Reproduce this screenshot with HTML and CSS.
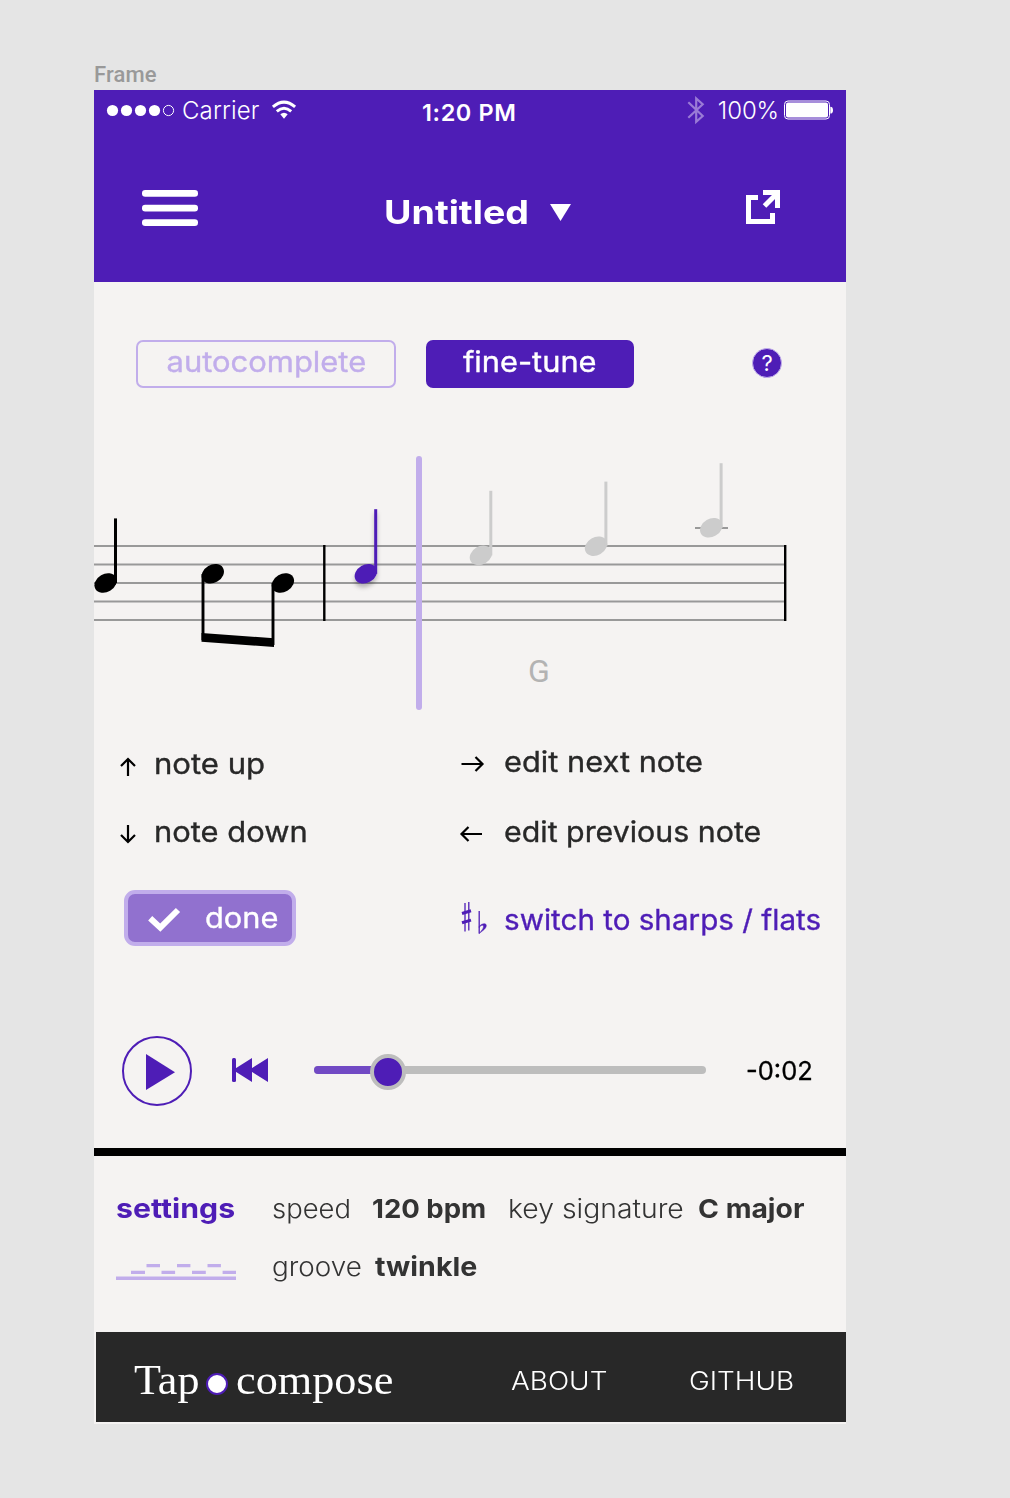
FILE: index.html
```html
<!DOCTYPE html>
<html lang="en">
<head>
<meta charset="utf-8">
<title>Tap compose</title>
<link rel="stylesheet" href="styles.css">
</head>
<body>
<div class="frame-label">Frame</div>
<main class="artboard">
  <header class="header">
    <div class="status">
      <div class="status-left">
        <svg width="68" height="12" viewBox="0.5 -0.5 68 12" fill="#fff"><circle cx="6" cy="6" r="5.6"/><circle cx="20" cy="6" r="5.6"/><circle cx="34" cy="6" r="5.6"/><circle cx="48" cy="6" r="5.6"/><circle cx="62" cy="6" r="5.1" fill="none" stroke="#fff"/></svg>
        <span class="carrier">Carrier</span>
        <svg class="wifi" width="24" height="20" viewBox="272 100 24 20" fill="none" stroke="#fff" stroke-width="3"><path d="M272.9 106.9Q284 97.4 295.1 106.9"/><path d="M276.8 111.4Q284 105.2 291.2 111.4"/><path d="M280.3 114.2Q284 111.2 287.7 114.2L284 118.8Z" fill="#fff" stroke="none"/></svg>
      </div>
      <span class="clock">1:20 PM</span>
      <div class="status-right">
        <svg width="18" height="30" viewBox="687 95 18 30" fill="none" stroke="#9a7bd6" stroke-width="2.2"><path d="M688.3 102.3L702.7 116L696.2 121.8V98.4L702.7 104.2L688.3 117.8"/></svg>
        <span class="percent">100%</span>
        <svg width="50" height="20" viewBox="784 100.5 50 20"><rect x="784.5" y="101.5" width="45" height="18" rx="3.5" fill="none" stroke="#fff"/><rect x="786" y="103" width="42" height="15" rx="2" fill="#fff"/><path d="M830.3 107.3q2.7 0 2.7 3.4t-2.7 3.4z" fill="#fff"/></svg>
      </div>
    </div>
    <nav class="nav">
      <svg width="56" height="36" viewBox="0 0 56 36" fill="#fff"><rect width="56" height="6.8" rx="3.2"/><rect y="14.7" width="56" height="6.8" rx="3.2"/><rect y="29.2" width="56" height="6.8" rx="3.2"/></svg>
      <div class="title"><span>Untitled</span><svg width="21" height="17" viewBox="0 0 21 17"><path d="M0 0H21L10.5 17Z" fill="#fff"/></svg></div>
      <svg class="share" width="34" height="34" viewBox="746 190 34 34" fill="none" stroke="#fff" stroke-width="5"><path d="M758 197.5H748.5V221.5H772.5V213"/><path d="M763 192.5H777.5V208M764.5 206L778 192.5"/></svg>
    </nav>
  </header>

  <section class="modes">
    <button class="mode outline"><span>autocomplete</span></button>
    <button class="mode solid"><span>fine-tune</span></button>
    <span class="help">?</span>
  </section>

  <svg class="staff" width="752" height="280" viewBox="94 440 752 280">
    <defs>
      <g id="up"><ellipse rx="11.8" ry="9" transform="rotate(-30)"/><path d="M8.4-64.6h3V0h-3z"/></g>
      <filter id="shadow" x="-50%" y="-20%" width="200%" height="150%"><feDropShadow dx="0" dy="4" stdDeviation="2" flood-color="#000" flood-opacity=".25"/></filter>
    </defs>
    <path d="M94 546.1H785M94 564.5H785M94 583H785M94 601.5H785M94 619.9H785M695 527.9h33" stroke="#999" stroke-width="2"/>
    <path d="M324.3 545V621M785.2 545V621" stroke="#000" stroke-width="2.4"/>
    <use href="#up" x="105.6" y="583"/>
    <g><ellipse rx="11.8" ry="9" transform="translate(212.8 573.8) rotate(-30)"/><ellipse rx="11.8" ry="9" transform="translate(282.9 583) rotate(-30)"/><path d="M203 574V640M273 583V645" stroke="#000" stroke-width="2.9"/><path d="M201.5 633L274 638.3V647L201.5 641.8Z"/></g>
    <use href="#up" x="365.8" y="573.8" fill="#4e1db6" filter="url(#shadow)"/>
    <g fill="#ccc"><use href="#up" x="480.9" y="555.4"/><use href="#up" x="596" y="546.2"/><use href="#up" x="711.2" y="527.8"/></g>
    <rect x="416" y="456" width="6" height="254" rx="3" fill="#c1adeb"/>
    <text x="528" y="682" class="chord">G</text>
  </svg>

  <section class="actions">
    <div class="action up"><svg width="18" height="20" viewBox="0 0 18 20"><path d="M9 19V2.5M2 9L9 2L16 9"/></svg><span>note up</span></div>
    <div class="action next"><svg width="24" height="18" viewBox="0 0 24 18"><path d="M1.5 9H22M15.5 2L22.5 9L15.5 16"/></svg><span>edit next note</span></div>
    <div class="action down"><svg width="18" height="20" viewBox="0 0 18 20"><path d="M9 1V17.5M2 11L9 18L16 11"/></svg><span>note down</span></div>
    <div class="action prev"><svg width="24" height="18" viewBox="0 0 24 18"><path d="M22 9H2M8.5 2L1.5 9L8.5 16"/></svg><span>edit previous note</span></div>
    <button class="done"><svg width="34" height="26" viewBox="0 0 34 26"><path d="M3.2 12.3L13.3 21.7L31 4" fill="none" stroke="#fff" stroke-width="6"/></svg><span>done</span></button>
    <div class="action switch"><svg class="accidentals" width="26" height="34" viewBox="460 901 26 34"><path d="M465 903V931.5M468.8 902V930.5" stroke-width="1.3"/><path d="M462 913.5L471 910.8M462 922.8L471 920.1" stroke-width="3"/><path d="M479.2 911V933.4" stroke-width="1.3"/><path d="M479.2 926.6C481 923.4 486.6 922.4 486.3 925.8C486 929 482 931 479.2 933.6C481.4 930.6 483.6 928.6 483.5 926.4C483.4 924.4 480.6 925 479.2 927.6Z" fill="#4e1db6" stroke-width=".5"/></svg><span>switch to sharps / flats</span></div>
  </section>

  <section class="player">
    <svg width="70" height="70" viewBox="122 1036 70 70"><circle cx="157" cy="1071" r="34" fill="none" stroke="#4e1db6" stroke-width="2"/><path d="M146 1054L175 1072.2L146 1090Z" fill="#4e1db6"/></svg>
    <svg class="rewind" width="36" height="24" viewBox="0 0 36 24" fill="#4e1db6"><rect width="4" height="24" rx="1.5"/><path d="M1 12L20 0V24ZM17 12L36 0V24Z"/></svg>
    <div class="track"><div class="played"></div><div class="knob"></div></div>
    <span class="time">-0:02</span>
  </section>

  <section class="settings">
    <div class="settings-side">
      <span class="heading">settings</span>
      <svg width="120" height="16" viewBox="116 1264 120 16"><path d="M116 1278.3H236" stroke-width="3.4"/><path d="M131 1272.4h14M161.5 1272.4h13.6M192 1272.4h13.8M222.6 1272.4H236M146.5 1265.7H160M177 1265.7h13.4M207.5 1265.7h13.4" stroke-width="3.2"/></svg>
    </div>
    <div class="settings-rows">
      <div class="row"><span class="name speed">speed</span><b class="bpm">120 bpm</b><span class="name key">key signature</span><b class="key-value">C major</b></div>
      <div class="row"><span class="name groove">groove</span><b class="groove-value">twinkle</b></div>
    </div>
  </section>

  <footer class="footer">
    <div class="brand"><span class="tap">Tap</span><i class="dot"></i><span class="compose">compose</span></div>
    <a class="about">ABOUT</a><a class="github">GITHUB</a>
  </footer>
</main>
</body>
</html>
```
FILE: styles.css
```css
* { box-sizing: border-box; }
body { margin: 0; background: #e5e5e5; font-family: Inter, "Open Sans", sans-serif; color: #282828; }
svg { display: block; flex: none; overflow: visible; }
span, b, a { white-space: nowrap; }
button { font: inherit; margin: 0; padding: 0; border: 0; }

.frame-label { height: 90px; padding: 62px 0 0 94px; font: 500 22px/26px Roboto, sans-serif; letter-spacing: .1px; color: #999; }
.artboard { width: 752px; height: 1334px; margin-left: 94px; background: #f5f3f2; overflow: hidden; }

/* Wide lettering: the labels are stretched from their left edge */
.title span, .action span, .done span, .time, .heading, .row span, .row b, .brand span, .footer a { display: block; flex: none; transform-origin: 0 50%; }
.mode, .action, .done, .time { -webkit-text-stroke: .35px currentColor; }

.header { height: 192px; background: #4e1db6; color: #fff; }
.status { display: grid; grid-template-columns: 315px 1fr auto; height: 42px; padding: 0 12px 0 13px; font-size: 24px; line-height: 41px; }
.status-left, .status-right { display: flex; align-items: center; height: 40px; }
.carrier { margin-left: 7px; font-weight: 300; letter-spacing: .15px; }
.wifi { margin: 0 0 0 12.5px; }
.clock { padding-top: 1.5px; font-weight: 600; font-size: 23.5px; letter-spacing: .6px; }
.percent { margin: 0 5px 0 13px; font-weight: 300; letter-spacing: -.1px; }
.nav { display: flex; padding: 58px 66px 0 48px; }
.title { display: flex; align-items: flex-start; margin-left: 186px; font-weight: 700; font-size: 33px; line-height: 44px; }
.title span { width: 166px; transform: scaleX(1.139); }
.title svg { margin-top: 14px; }
.share { margin-left: auto; }

.modes { display: flex; height: 158px; padding: 58px 64px 0 42px; }
.mode { height: 48px; border-radius: 7px; font-size: 28px; line-height: 40px; padding-bottom: 4px; }
.mode span { display: inline-block; }
.outline { width: 260px; border: 2px solid #c1adeb; background: none; color: #c1adeb; }
.outline span { transform: scaleX(1.105); }
.solid { width: 208px; margin-left: 30px; background: #4e1db6; color: #fff; }
.solid span { transform: scaleX(1.1); }
.help { width: 30px; height: 30px; margin: 8px 0 0 auto; border: 1px solid #c1adeb; border-radius: 50%; background: #4e1db6; color: #fff; font-size: 22px; line-height: 28px; text-align: center; }

.staff { overflow: hidden; }
.chord { font: 32px Roboto, sans-serif; fill: #b3b3b3; }

.actions { display: grid; grid-template-columns: 341px 1fr; grid-template-rows: 70px 88px 60px; height: 268px; padding: 24px 0 0 25px; font-size: 28px; line-height: 40px; }
.action { display: flex; align-items: flex-start; }
.action svg { margin-top: 13px; fill: none; stroke: #000; stroke-width: 2.2; }
.down svg { margin-top: 12px; }
.up span, .down span { margin-left: 17px; }
.up span { transform: scaleX(1.11); }
.down span { transform: scaleX(1.103); }
.next span, .prev span { margin-left: 19.5px; }
.next span { transform: scaleX(1.1); }
.prev span { transform: scaleX(1.084); }
.next, .down, .prev { margin-top: -2px; }
.switch { color: #4e1db6; margin-top: -2px; }
.switch .accidentals { margin-top: 1px; stroke: #4e1db6; }
.switch span { margin-left: 18px; transform: scaleX(1.058); }
.done { display: flex; width: 172px; height: 56px; margin: -12px 0 0 5px; padding: 4px 0 0 19px; border: 4px solid #c1adeb; border-radius: 11px; background: #9171cf; color: #fff; }
.done svg { margin-top: 8px; }
.done span { margin-left: 23.5px; transform: scaleX(1.1); }

.player { display: flex; height: 168px; padding: 48px 0 0 28px; border-bottom: 8px solid #000; }
.rewind { margin: 22px 46px 0 40px; }
.track { position: relative; width: 392px; height: 8px; margin-top: 30px; border-radius: 4px; background: #bdbdbd; }
.played { width: 74px; height: 8px; border-radius: 4px; background: #7149c4; }
.knob { position: absolute; left: 56px; top: -12px; width: 36px; height: 36px; border: 4px solid #bdbdbd; border-radius: 50%; background: #4e1db6; }
.time { margin: 15px 0 0 39.5px; font-size: 26px; line-height: 40px; color: #000; transform: scaleX(.98); }

.settings { display: flex; height: 176px; padding: 32px 0 0 22px; font-size: 26px; line-height: 40px; color: #333; }
.settings-side { width: 155.5px; }
.heading { width: max-content; margin-left: -.5px; font-size: 27.5px; font-weight: 700; color: #4e1db6; transform: scaleX(1.1); }
.settings-side svg { margin-top: 36px; fill: none; stroke: #c1adeb; }
.row { display: flex; height: 58px; padding-top: 1px; }
.name { font-weight: 300; }
.speed { width: 100.5px; transform: scaleX(1.055); }
.bpm { width: 136px; transform: scaleX(1.06); }
.key { width: 189.5px; transform: scaleX(1.09); }
.key-value { transform: scaleX(1.088); }
.groove { width: 103.5px; transform: scaleX(1.07); }
.groove-value { transform: scaleX(1.1); }

.footer { display: flex; height: 90px; margin-left: 2px; padding-left: 38px; background: #282828; color: #fff; font-size: 25.5px; font-weight: 300; line-height: 40px; }
.brand { display: flex; width: 377px; padding-top: 28px; font-family: "Liberation Serif", serif; font-weight: 400; font-size: 42px; }
.tap { width: 72px; transform: scaleX(1.05); }
.compose { transform: scaleX(1.054); }
.dot { width: 22px; height: 22px; margin: 13px 8px 0 0; border: 2px solid #4e1db6; border-radius: 50%; background: #fff; }
.about, .github { padding-top: 29px; }
.about { width: 178px; transform: scaleX(1.095); }
.github { transform: scaleX(1.095); }
```
